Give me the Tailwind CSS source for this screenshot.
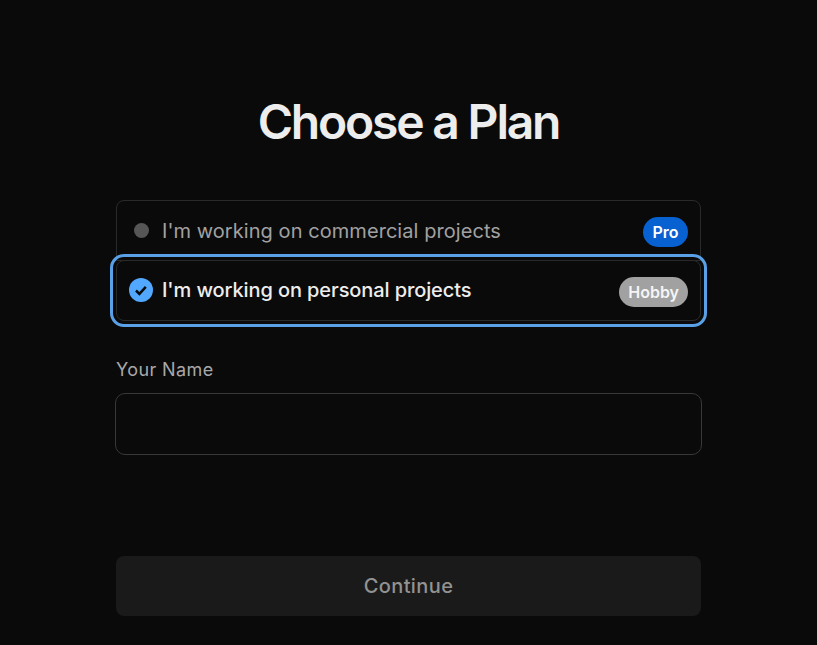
<!DOCTYPE html>
<html lang="en">
<head>
    <meta charset="UTF-8">
    <meta name="viewport" content="width=device-width, initial-scale=1.0">
    <title>Choose a Plan</title>
    <script src="https://cdn.jsdelivr.net/npm/@tailwindcss/browser@4"></script>
</head>
<body class="bg-[#0a0a0a] font-['Inter',sans-serif] overflow-hidden">
    <div class="w-[817px] h-[645px] px-[116px] pt-[95px]">
        <h1 class="text-[48px] leading-[54px] font-semibold tracking-[-2.2px] text-center text-[#ededed]">Choose a Plan</h1>

        <div class="mt-[51px] flex flex-col">
            <div class="h-[61px] flex items-center border border-[#2a2a2a] rounded-t-lg pl-[17px] pr-[12px]">
                <span class="w-[15px] h-[15px] rounded-full bg-[#565656] shrink-0"></span>
                <span class="ml-[13px] text-[20px] tracking-[0.06px] text-[#a1a1a1]">I'm working on commercial projects</span>
                <span class="ml-auto mt-[3px] h-[30px] px-[9.5px] flex items-center rounded-full bg-[#0761d1] text-white text-[16px] font-semibold">Pro</span>
            </div>
            <div class="h-[61px] -mt-px flex items-center border border-[#2a2a2a] rounded-lg outline-3 outline-offset-[3px] outline-[#5aa0e6] pl-[12px] pr-[12px] bg-[#0a0a0a]">
                <svg class="w-[24px] h-[24px] shrink-0 mb-px" viewBox="0 0 24 24">
                    <circle cx="12" cy="12" r="12" fill="#52a8ff"/>
                    <path d="M7 12.5l3.4 3.4 6.4-7" fill="none" stroke="#0a0a0a" stroke-width="2.5"/>
                </svg>
                <span class="ml-[9px] mb-[2px] text-[20px] font-medium tracking-[-0.1px] text-[#ededed]">I'm working on personal projects</span>
                <span class="ml-auto mt-[3px] h-[30px] px-[9px] flex items-center rounded-full bg-[#a1a1a1] text-[#f5f5f5] text-[16px] font-semibold">Hobby</span>
            </div>
        </div>

        <label class="block mt-[36px] text-[18px] leading-[26px] tracking-[0.4px] text-[#a8a8a8]">Your Name</label>
        <input type="text" class="block -ml-px mt-[10px] w-[587px] h-[62px] bg-[#0a0a0a] border border-[#383838] rounded-[10px]">

        <button class="block mt-[101px] w-[585px] h-[60px] bg-[#1a1a1a] rounded-lg text-[20px] font-medium tracking-[0.4px] text-[#929292]">Continue</button>
    </div>
</body>
</html>
